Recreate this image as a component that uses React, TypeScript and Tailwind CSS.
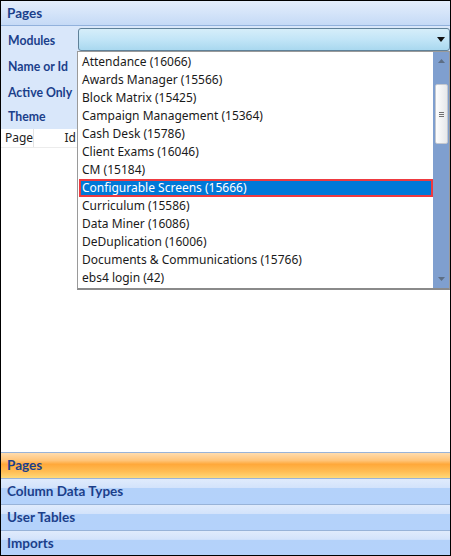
import React from "react";

const items = [
  "Attendance (16066)",
  "Awards Manager (15566)",
  "Block Matrix (15425)",
  "Campaign Management (15364)",
  "Cash Desk (15786)",
  "Client Exams (16046)",
  "CM (15184)",
  "Configurable Screens (15666)",
  "Curriculum (15586)",
  "Data Miner (16086)",
  "DeDuplication (16006)",
  "Documents & Communications (15766)",
  "ebs4 login (42)",
];

const font = { fontFamily: '"Noto Sans", "Open Sans", sans-serif' };
const bold = { fontFamily: 'Lato, "Noto Sans", sans-serif' };

export default function App() {
  return (
    <div
      className="w-[451px] h-[556px] border border-black bg-white flex flex-col overflow-hidden relative"
      style={font}
    >
      {/* header */}
      <div
        className="h-[25px] shrink-0 bg-gradient-to-b from-[#e4eefc] to-[#c5daf6] border-b border-[#91b1dc] flex items-center pl-[6px] text-[13.5px] font-bold text-[#1b3f8b]"
        style={bold}
      >
        Pages
      </div>
      {/* form */}
      <div
        className="h-[103px] shrink-0 bg-[#d9e7fa] flex flex-col pt-[2px] text-[12.25px] font-bold text-[#1b3f8b]"
        style={bold}
      >
        <div className="h-[26px] flex items-center pl-[7px]">Modules</div>
        <div className="h-[26px] flex items-center pl-[7px]">Name or Id</div>
        <div className="h-[26px] flex items-center pl-[7px]">Active Only</div>
        <div className="h-[23px] flex items-center pl-[7px]">Theme</div>
      </div>
      {/* grid header */}
      <div className="h-[19px] shrink-0 flex text-[12px] text-[#222] border-b border-[#ececec]">
        <div className="w-[33px] pl-[4px] flex items-center border-r border-[#e4e4e4]">Page</div>
        <div className="w-[43px] pr-[1px] flex items-center justify-end">Id</div>
      </div>
      <div className="flex-1 bg-white" />
      {/* bottom nav */}
      <div className="shrink-0 flex flex-col text-[13.5px] font-bold text-[#1b3f8b]" style={bold}>
        <div className="h-[26px] border-t border-[#98b3d8] flex items-center pl-[6px] bg-[linear-gradient(to_bottom,#ffdcae_0%,#ffc478_30%,#ffa83a_45%,#ffbe55_75%,#ffd978_100%)]">
          Pages
        </div>
        <div className="h-[26px] border-t border-[#98b3d8] flex items-center pl-[6px] bg-[linear-gradient(to_bottom,#e0ebfc_0%,#d3e3fb_35%,#b4d2fa_38%,#b4d2fb_100%)]">
          Column Data Types
        </div>
        <div className="h-[26px] border-t border-[#98b3d8] flex items-center pl-[6px] bg-[linear-gradient(to_bottom,#e0ebfc_0%,#d3e3fb_35%,#b4d2fa_38%,#b4d2fb_100%)]">
          User Tables
        </div>
        <div className="h-[25px] border-t border-[#98b3d8] flex items-center pl-[6px] bg-[linear-gradient(to_bottom,#e0ebfc_0%,#d3e3fb_35%,#b4d2fa_38%,#b4d2fb_100%)]">
          Imports
        </div>
      </div>

      {/* combobox */}
      <div className="absolute left-[77px] top-[27px] w-[372px] h-[23px] rounded-[3px] border border-[#5f8199] bg-[linear-gradient(to_bottom,#d6eefa_0%,#c2e5f7_50%,#a9d8ef_100%)] flex items-center justify-end pr-[4px]">
        <svg width="8" height="5" viewBox="0 0 8 5">
          <path d="M0 0 H8 L4 5 Z" fill="#111" />
        </svg>
      </div>

      {/* dropdown list */}
      <div className="absolute left-[76px] top-[50px] w-[373px] h-[239px] bg-white border border-[#9a9a9a] border-b-[2px] border-b-[#8a8a8a] flex">
        <div className="flex-1 flex flex-col pt-[1px] text-[12px] text-[#1a1a1a]">
          {items.map((t) =>
            t.startsWith("Configurable") ? (
              <div
                key={t}
                className="h-[18px] flex items-center pl-[4px] bg-[#0078d7] text-white outline outline-2 outline-[#ee3a40] -outline-offset-2 ml-[1px]"
              >
                <span className="-ml-[1px]">{t}</span>
              </div>
            ) : (
              <div key={t} className="h-[18px] flex items-center pl-[4px]">
                {t}
              </div>
            )
          )}
        </div>
        {/* scrollbar */}
        <div className="w-[16px] bg-[#7f9fcf] flex flex-col items-center">
          <div className="h-[18px] flex items-center justify-center">
            <svg width="7" height="4" viewBox="0 0 7 4">
              <path d="M0 4 L3.5 0 L7 4 Z" fill="#5d6e85" />
            </svg>
          </div>
          <div className="mt-[14px] w-[13px] h-[60px] rounded-[2px] border border-[#c4c8cf] bg-[linear-gradient(to_right,#fdfdfd,#e6e8eb)] flex items-center justify-center">
            <div className="flex flex-col gap-[1px]">
              <div className="w-[5px] h-[1px] bg-[#707070]" />
              <div className="w-[5px] h-[1px] bg-[#707070]" />
              <div className="w-[5px] h-[1px] bg-[#707070]" />
            </div>
          </div>
          <div className="flex-1" />
          <div className="h-[18px] flex items-center justify-center">
            <svg width="7" height="4" viewBox="0 0 7 4">
              <path d="M0 0 H7 L3.5 4 Z" fill="#5d6e85" />
            </svg>
          </div>
        </div>
      </div>
    </div>
  );
}
